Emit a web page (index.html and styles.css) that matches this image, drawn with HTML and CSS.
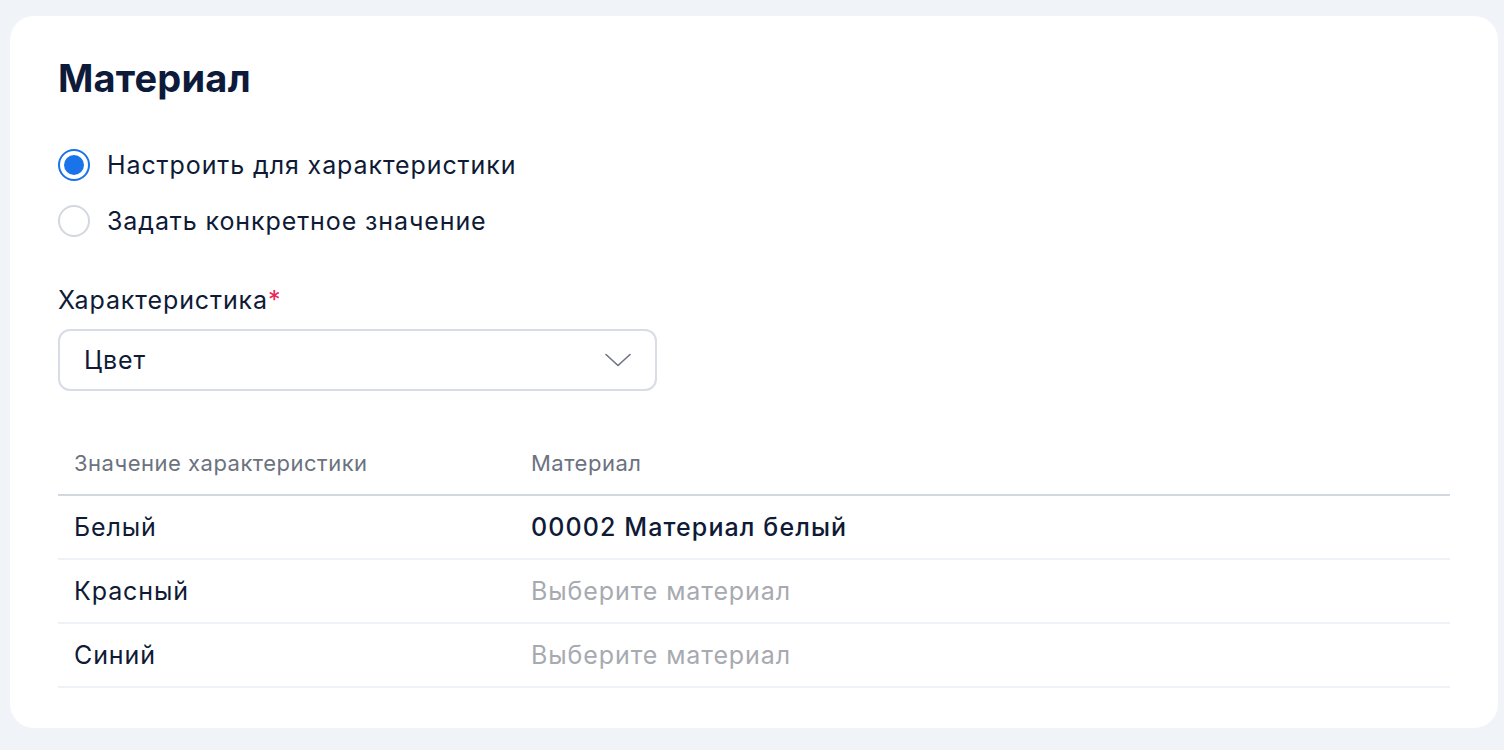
FILE: index.html
```html
<!DOCTYPE html>
<html lang="ru">
<head>
    <meta charset="UTF-8">
    <meta name="viewport" content="width=device-width, initial-scale=1.0">
    <title>Материал</title>
    <link rel="stylesheet" href="styles.css">
</head>
<body>
    <div class="card">
        <h1 class="title">Материал</h1>

        <div class="radio-group">
            <label class="radio-row">
                <span class="radio checked"></span>
                <span class="radio-text">Настроить для характеристики</span>
            </label>
            <label class="radio-row">
                <span class="radio"></span>
                <span class="radio-text">Задать конкретное значение</span>
            </label>
        </div>

        <div class="field">
            <div class="field-label">Характеристика<span class="required">*</span></div>
            <div class="select">
                <span class="select-value">Цвет</span>
                <svg class="chevron" width="26" height="14" viewBox="0 0 26 14" fill="none">
                    <path d="M1 1.5 L13 12.5 L25 1.5" stroke="#6b7280" stroke-width="1.6" stroke-linecap="round" stroke-linejoin="round"/>
                </svg>
            </div>
        </div>

        <table class="values">
            <thead>
                <tr>
                    <th class="col-value">Значение характеристики</th>
                    <th>Материал</th>
                </tr>
            </thead>
            <tbody>
                <tr>
                    <td>Белый</td>
                    <td class="chosen">00002 Материал белый</td>
                </tr>
                <tr>
                    <td>Красный</td>
                    <td class="placeholder">Выберите материал</td>
                </tr>
                <tr>
                    <td>Синий</td>
                    <td class="placeholder">Выберите материал</td>
                </tr>
            </tbody>
        </table>
    </div>
</body>
</html>
```

FILE: styles.css
```css
body {
    font-family: Inter, "Noto Sans", sans-serif;
    background-color: #f0f3f8;
    color: #0f1a36;
    margin: 0;
    padding: 16px 6px 22px 10px;
}
.card {
    background: #fff;
    border-radius: 24px;
    padding: 40px 48px 40px 48px;
}
.title {
    margin: 0;
    font-size: 38px;
    line-height: 44px;
    font-weight: 700;
    letter-spacing: 0.2px;
    color: #0d1a3a;
}
.radio-group {
    display: flex;
    flex-direction: column;
    gap: 16px;
    margin-top: 45px;
}
.radio-row {
    display: flex;
    align-items: center;
    height: 40px;
    gap: 17px;
}
.radio {
    box-sizing: border-box;
    width: 32px;
    height: 32px;
    border: 2px solid #d3d7df;
    border-radius: 50%;
    display: flex;
    align-items: center;
    justify-content: center;
}
.radio.checked {
    border-color: #1a73e8;
}
.radio.checked::after {
    content: "";
    width: 20px;
    height: 20px;
    border-radius: 50%;
    background: #1a73e8;
}
.radio-text,
.field-label,
.select-value,
.values td {
    font-size: 25px;
    letter-spacing: 0.9px;
}
.field {
    margin-top: 43px;
    width: 599px;
}
.field-label {
    line-height: 32px;
    margin-bottom: 13px;
}
.required {
    color: #e8245c;
}
.select {
    box-sizing: border-box;
    height: 62px;
    border: 2px solid #d8dce4;
    border-radius: 12px;
    padding: 0 24px;
    display: flex;
    align-items: center;
    justify-content: space-between;
}
.values {
    margin-top: 41px;
    width: 100%;
    border-collapse: collapse;
}
.values th {
    height: 62px;
    padding: 0 16px;
    text-align: left;
    font-size: 22px;
    letter-spacing: 0.5px;
    font-weight: 400;
    color: #6b7280;
    border-bottom: 2px solid #d3d7e0;
}
.values th.col-value {
    width: 425px;
}
.values td {
    height: 62px;
    padding: 0 16px;
    border-bottom: 2px solid #eef1f5;
}
.values td.chosen {
    font-weight: 500;
    letter-spacing: 1.1px;
}
.values td.placeholder {
    color: #a7aab1;
}
```
